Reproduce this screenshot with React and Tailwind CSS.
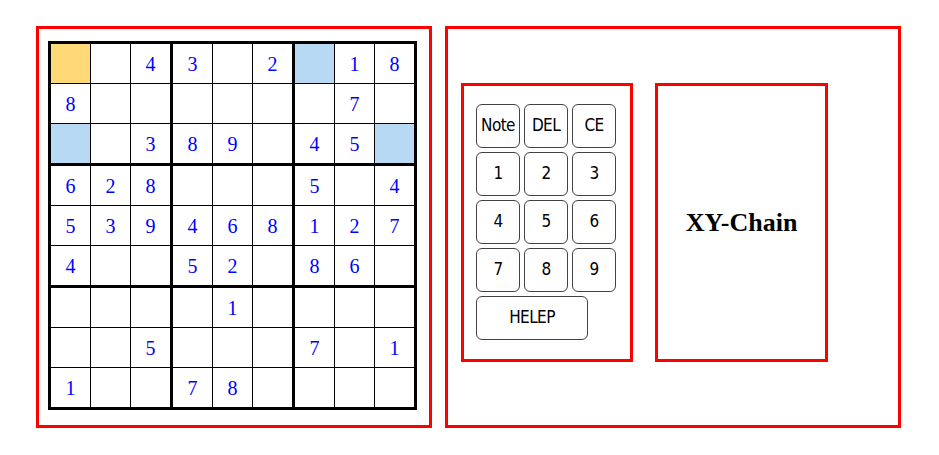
import React from "react";

const G = [
  ["Y", "", "4", "3", "", "2", "B", "1", "8"],
  ["8", "", "", "", "", "", "", "7", ""],
  ["B", "", "3", "8", "9", "", "4", "5", "B"],
  ["6", "2", "8", "", "", "", "5", "", "4"],
  ["5", "3", "9", "4", "6", "8", "1", "2", "7"],
  ["4", "", "", "5", "2", "", "8", "6", ""],
  ["", "", "", "", "1", "", "", "", ""],
  ["", "", "5", "", "", "", "7", "", "1"],
  ["1", "", "", "7", "8", "", "", "", ""],
];

function Cell({ v }) {
  const bg = v === "Y" ? "bg-[#ffd877]" : v === "B" ? "bg-[#b7d9f4]" : "bg-white";
  const txt = v === "Y" || v === "B" ? "" : v;
  return (
    <div
      className={`${bg} w-[39px] h-[39px] flex items-center justify-center text-[20px] text-[#0000ff] leading-none`}
    >
      {txt}
    </div>
  );
}

function Box({ br, bc }) {
  const cells = [];
  for (let r = 0; r < 3; r++) {
    for (let c = 0; c < 3; c++) {
      cells.push(<Cell key={`${r}-${c}`} v={G[br * 3 + r][bc * 3 + c]} />);
    }
  }
  return <div className="grid grid-cols-3 gap-[1px] bg-black">{cells}</div>;
}

function Sudoku() {
  const boxes = [];
  for (let br = 0; br < 3; br++) {
    for (let bc = 0; bc < 3; bc++) {
      boxes.push(<Box key={`${br}-${bc}`} br={br} bc={bc} />);
    }
  }
  return (
    <div
      className="grid grid-cols-3 gap-[3px] bg-black border-[3px] border-black w-max"
      style={{ fontFamily: '"Liberation Serif", "Times New Roman", serif' }}
    >
      {boxes}
    </div>
  );
}

function Btn({ children, wide }) {
  return (
    <button
      className={`${wide ? "w-[112px]" : "w-[44px]"} h-[44px] rounded-[6px] border border-[#444] bg-white text-black text-[17px] flex items-center justify-center p-0 tracking-[-0.6px]`}
    >
      {children}
    </button>
  );
}

export default function App() {
  return (
    <div
      className="flex gap-[13px] pl-[36px] pt-[26px] bg-white w-[939px] h-[455px]"
      style={{ fontFamily: '"DejaVu Sans Condensed", "DejaVu Sans", sans-serif' }}
    >
      <div className="w-[396px] h-[402px] border-[3px] border-[#ff0000] pl-[9px] pt-[12px]">
        <Sudoku />
      </div>
      <div className="w-[456px] h-[402px] border-[3px] border-[#ff0000] pl-[13px] pt-[54px]">
        <div className="flex gap-[22px]">
          <div className="w-[172px] h-[279px] border-[3px] border-[#ff0000] pl-[12px] pt-[18px]">
            <div className="grid grid-cols-[44px_44px_44px] gap-[4px]">
              <Btn>Note</Btn>
              <Btn>DEL</Btn>
              <Btn>CE</Btn>
              <Btn>1</Btn>
              <Btn>2</Btn>
              <Btn>3</Btn>
              <Btn>4</Btn>
              <Btn>5</Btn>
              <Btn>6</Btn>
              <Btn>7</Btn>
              <Btn>8</Btn>
              <Btn>9</Btn>
              <div className="col-span-3">
                <Btn wide>HELEP</Btn>
              </div>
            </div>
          </div>
          <div className="w-[173px] h-[279px] border-[3px] border-[#ff0000] flex items-center justify-center">
            <span
              className="text-[26px] font-bold text-black"
              style={{ fontFamily: '"Liberation Serif", "Times New Roman", serif' }}
            >
              XY-Chain
            </span>
          </div>
        </div>
      </div>
    </div>
  );
}
